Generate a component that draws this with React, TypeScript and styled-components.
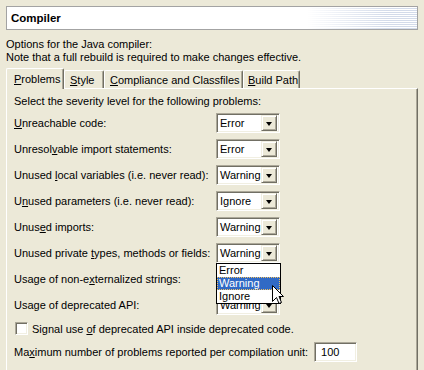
import styled, { createGlobalStyle } from "styled-components";

const GlobalStyle = createGlobalStyle`
  html, body {
    margin: 0;
    padding: 0;
    background: #ece9d8;
    overflow: hidden;
  }
  body {
    font-family: "Liberation Sans", Arial, sans-serif;
    font-size: 11px;
    color: #000;
  }
`;

interface Row {
  label: string;
  key: number;
  value: string;
  open?: boolean;
}

const rows: Row[] = [
  { label: "Unreachable code:", key: 0, value: "Error" },
  { label: "Unresolvable import statements:", key: 7, value: "Error" },
  { label: "Unused local variables (i.e. never read):", key: 7, value: "Warning" },
  { label: "Unused parameters (i.e. never read):", key: 1, value: "Ignore" },
  { label: "Unused imports:", key: 4, value: "Warning" },
  { label: "Unused private types, methods or fields:", key: 15, value: "Warning", open: true },
  { label: "Usage of non-externalized strings:", key: 14, value: "Warning" },
  { label: "Usage of deprecated API:", key: 3, value: "Warning" },
];

const tabs = [
  { label: "Problems", width: 58, pad: 7 },
  { label: "Style", width: 40, pad: 5 },
  { label: "Compliance and Classfiles", width: 139, pad: 5 },
  { label: "Build Path", width: 57, pad: 4 },
];

const Page = styled.div`
  width: 424px;
  height: 370px;
  padding: 6px 6px 0;
  box-sizing: border-box;
  display: flex;
  flex-direction: column;
`;

const Header = styled.div`
  height: 24px;
  box-sizing: border-box;
  border: 1px solid #a3a3a3;
  display: flex;
  align-items: center;
  padding-left: 4px;
  font-weight: bold;
  font-size: 11.5px;
  background:
    linear-gradient(to right, #fff 300px, rgba(255, 255, 255, 0) 380px),
    repeating-linear-gradient(to bottom, #fff 0 1px, #d3dbea 1px 2px);
`;

const Description = styled.div`
  margin-top: 8px;
  line-height: 13px;
`;

const TabBar = styled.div`
  margin-top: 4px;
  height: 20px;
  display: flex;
  align-items: flex-end;
  position: relative;
  z-index: 1;
`;

const Tab = styled.div<{ $active?: boolean; $width: number; $pad: number }>`
  width: ${(p) => p.$width}px;
  height: ${(p) => (p.$active ? 21 : 18)}px;
  margin-bottom: ${(p) => (p.$active ? -1 : 0)}px;
  padding-left: ${(p) => p.$pad}px;
  box-sizing: border-box;
  background: #ece9d8;
  border-top: 1px solid #fff;
  border-left: 1px solid #fff;
  border-right: 1px solid #716f64;
  border-radius: 2px 2px 0 0;
  box-shadow: inset -1px 0 #aca899;
  display: flex;
  align-items: ${(p) => (p.$active ? "flex-start" : "center")};
  padding-top: ${(p) => (p.$active ? 4 : 0)}px;
  white-space: nowrap;
`;

const Mn = styled.span`
  text-decoration: underline;
`;

const Panel = styled.div`
  flex: 1;
  border-top: 1px solid #fff;
  border-left: 1px solid #fff;
  border-right: 1px solid #716f64;
  box-shadow: inset -1px 0 #aca899;
  padding: 6px 0 0 7px;
  display: flex;
  flex-direction: column;
`;

const Line = styled.div`
  line-height: 13px;
  white-space: nowrap;
`;

const Grid = styled.div`
  margin-top: 5px;
  display: grid;
  grid-template-columns: 202px 64px;
  grid-auto-rows: 20px;
  row-gap: 6px;
  align-items: center;
`;

const Combo = styled.div`
  position: relative;
  width: 64px;
  height: 20px;
  box-sizing: border-box;
  border: 1px solid;
  border-color: #aca899 #fff #fff #aca899;
  box-shadow: inset 1px 1px #716f64, inset -1px -1px #f1efe2;
  background: #fff;
  display: flex;
  align-items: center;
  padding: 2px 2px 2px 3px;
`;

const ComboText = styled.span`
  flex: 1;
`;

const ComboButton = styled.div`
  width: 16px;
  height: 16px;
  box-sizing: border-box;
  background: #ece9d8;
  border: 1px solid;
  border-color: #f1efe2 #716f64 #716f64 #f1efe2;
  box-shadow: inset 1px 1px #fff, inset -1px -1px #aca899;
  display: flex;
  align-items: center;
  justify-content: center;
`;

const Arrow = styled.div`
  width: 0;
  height: 0;
  border-left: 3.5px solid transparent;
  border-right: 3.5px solid transparent;
  border-top: 4px solid #000;
  margin-top: 1px;
`;

const DropList = styled.div`
  position: absolute;
  left: -1px;
  top: calc(100% + 1px);
  width: 65px;
  box-sizing: border-box;
  border: 1px solid #000;
  background: #fff;
  z-index: 5;
`;

const DropItem = styled.div<{ $selected?: boolean }>`
  height: 13px;
  line-height: 13px;
  padding-left: 2px;
  background: ${(p) => (p.$selected ? "#316ac5" : "#fff")};
  color: ${(p) => (p.$selected ? "#fff" : "#000")};
  outline: ${(p) => (p.$selected ? "1px dotted #f0c060" : "none")};
  outline-offset: -1px;
`;

const Cursor = styled.svg`
  position: absolute;
  left: 55px;
  top: 21px;
`;

const CheckRow = styled.div`
  margin-top: 7px;
  height: 13px;
  display: flex;
  align-items: center;
  gap: 4px;
  padding-left: 1px;
  white-space: nowrap;
`;

const CheckBox = styled.div`
  width: 13px;
  height: 13px;
  box-sizing: border-box;
  border: 1px solid;
  border-color: #aca899 #fff #fff #aca899;
  box-shadow: inset 1px 1px #716f64, inset -1px -1px #f1efe2;
  background: #fff;
`;

const MaxRow = styled.div`
  margin-top: 7px;
  display: grid;
  grid-template-columns: auto 43px;
  column-gap: 6px;
  justify-content: start;
  align-items: center;
  white-space: nowrap;
`;

const TextField = styled.div`
  height: 20px;
  box-sizing: border-box;
  border: 1px solid;
  border-color: #aca899 #fff #fff #aca899;
  box-shadow: inset 1px 1px #716f64, inset -1px -1px #f1efe2;
  background: #fff;
  display: flex;
  align-items: center;
  padding-left: 6px;
`;

const Label = ({ text, at }: { text: string; at: number }) => (
  <span>
    {text.slice(0, at)}
    <Mn>{text[at]}</Mn>
    {text.slice(at + 1)}
  </span>
);

const SelectBox = ({ value, open }: { value: string; open?: boolean }) => (
  <Combo>
    <ComboText>{value}</ComboText>
    <ComboButton>
      <Arrow />
    </ComboButton>
    {open && (
      <DropList>
        <DropItem>Error</DropItem>
        <DropItem $selected>Warning</DropItem>
        <DropItem>Ignore</DropItem>
        <Cursor width="13" height="20" viewBox="0 0 13 20">
          <path
            d="M0.5 0.5 L0.5 16.5 L4.5 12.5 L7 18.5 L9.5 17.5 L7 11.5 L11.5 11.5 Z"
            fill="#fff"
            stroke="#000"
            strokeWidth="1"
          />
        </Cursor>
      </DropList>
    )}
  </Combo>
);

export default function App() {
  return (
    <>
      <GlobalStyle />
      <Page>
        <Header>Compiler</Header>
        <Description>
          Options for the Java compiler:
          <br />
          Note that a full rebuild is required to make changes effective.
        </Description>
        <TabBar>
          {tabs.map((t, i) => (
            <Tab key={t.label} $active={i === 0} $width={t.width} $pad={t.pad}>
              <Label text={t.label} at={0} />
            </Tab>
          ))}
        </TabBar>
        <Panel>
          <Line>Select the severity level for the following problems:</Line>
          <Grid>
            {rows.flatMap((r) => [
              <Line key={r.label}>
                <Label text={r.label} at={r.key} />
              </Line>,
              <SelectBox key={r.label + "-v"} value={r.value} open={r.open} />,
            ])}
          </Grid>
          <CheckRow>
            <CheckBox />
            <Label text="Signal use of deprecated API inside deprecated code." at={11} />
          </CheckRow>
          <MaxRow>
            <Line>
              <Label text="Maximum number of problems reported per compilation unit:" at={2} />
            </Line>
            <TextField>100</TextField>
          </MaxRow>
        </Panel>
      </Page>
    </>
  );
}
